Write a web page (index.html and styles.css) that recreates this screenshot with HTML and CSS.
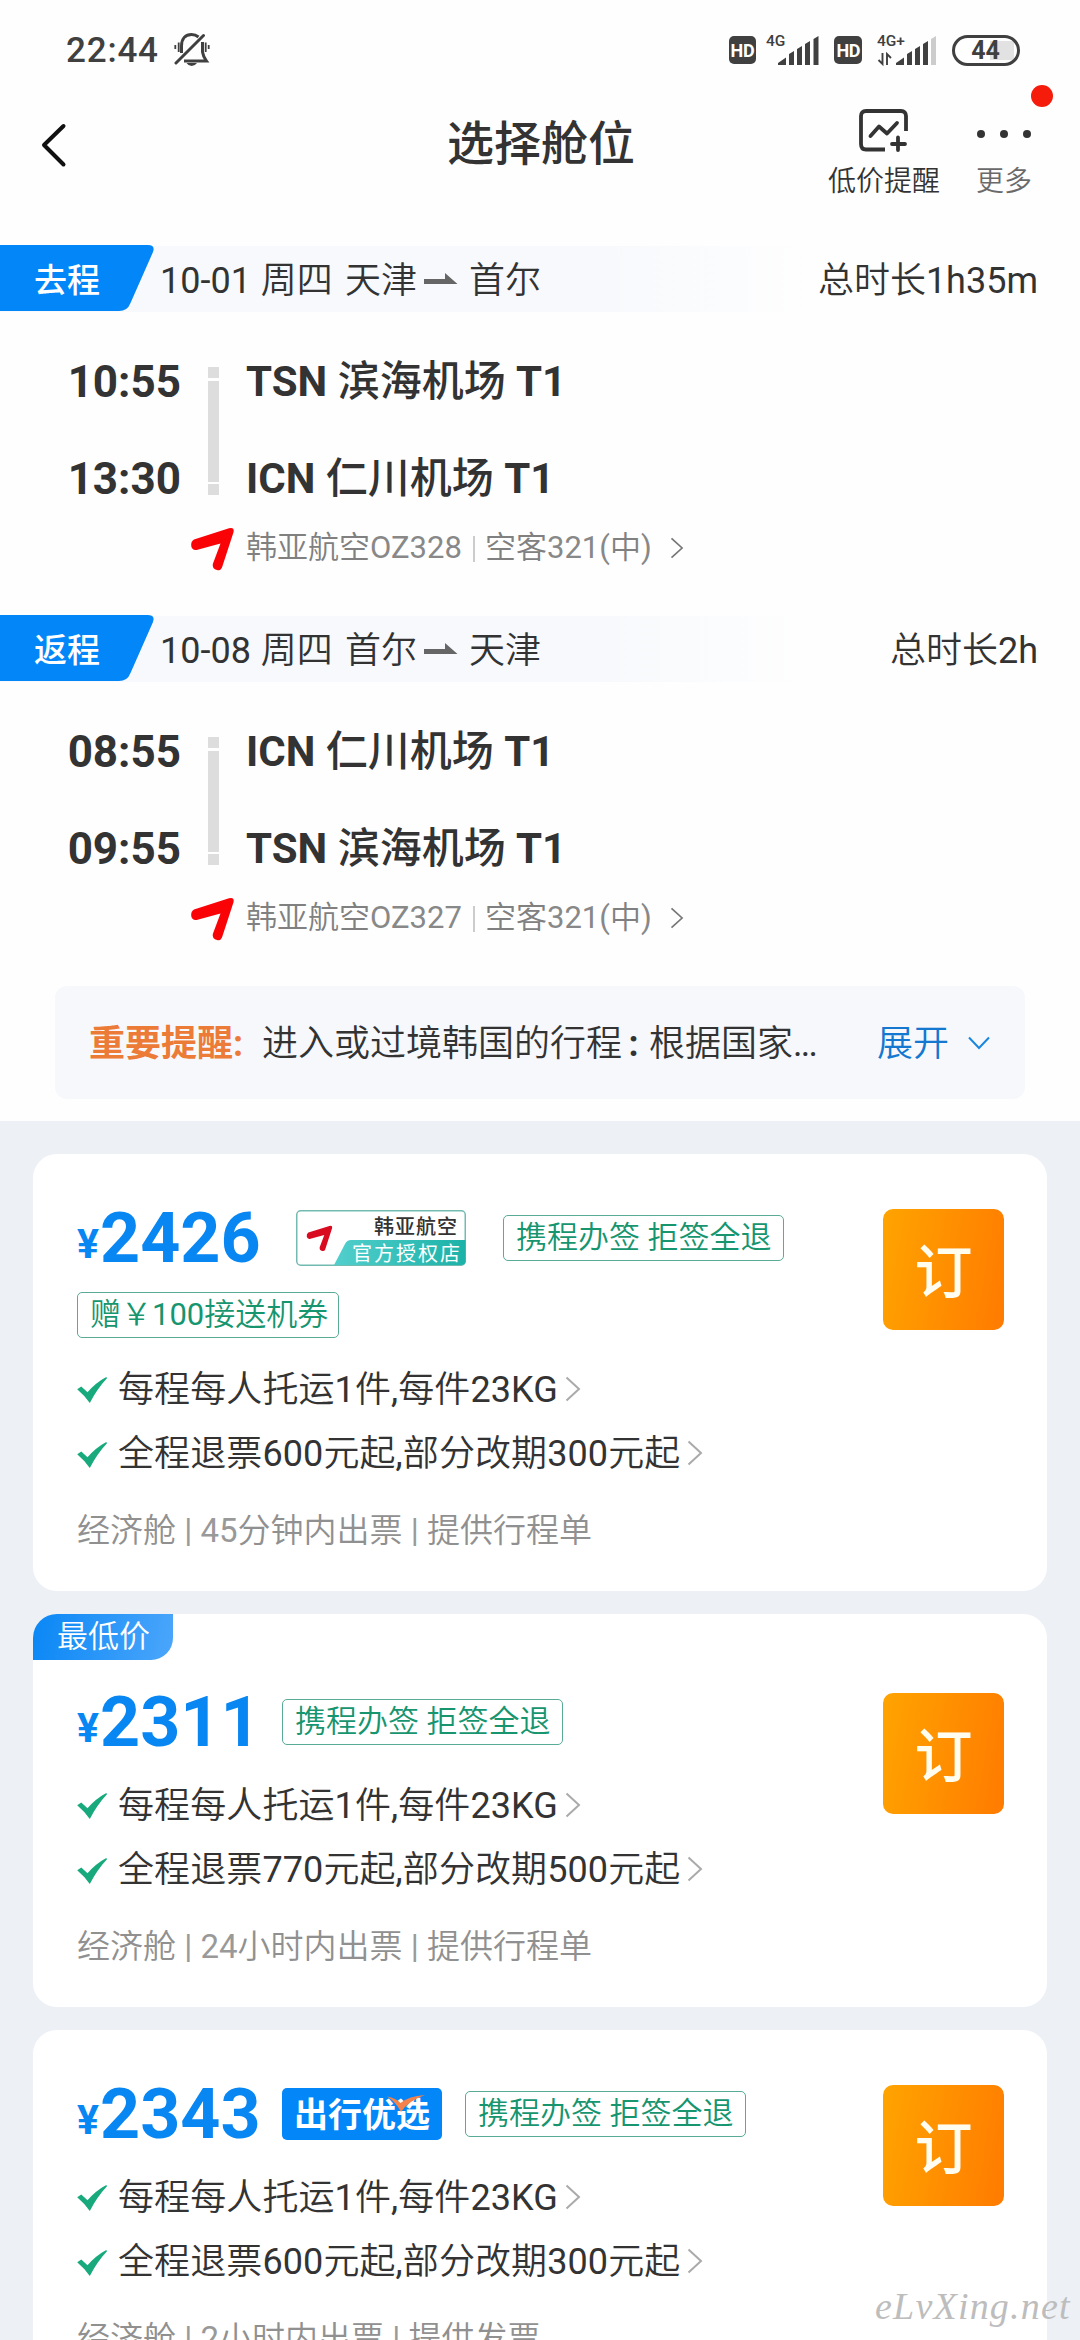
FILE: index.html
```html
<!DOCTYPE html>
<html lang="zh-CN">
<head>
<meta charset="utf-8">
<title>选择舱位</title>
<link rel="stylesheet" href="styles.css">
</head>
<body>
<svg class="defs" width="0" height="0" aria-hidden="true">
  <defs>
    <linearGradient id="teal" x1="0" x2="1"><stop offset="0" stop-color="#52cfcd"/><stop offset="1" stop-color="#1cb2a8"/></linearGradient>
    <symbol id="wing" viewBox="0 0 45 45"><path d="M4 13.5L39 2.3Q44.5 1 43.6 6L32 41.5Q30.500 45 27 44Q22 43 22.800 38L30.500 17.500L7.500 23.700Q2.500 25 1.300 20.500Q0.500 15.500 4 13.5Z"/></symbol>
    <symbol id="check" viewBox="0 0 30 26"><path d="M0.200 12.300L4.300 9.500L10.500 15.200Q19 5.500 29.300 0L30 1.300Q20 12 12.800 26Q7 18 0.200 12.300Z"/></symbol>
    <symbol id="more" viewBox="0 0 16 26"><path d="M1.500 1.500L14 13L1.500 24.500" fill="none" stroke="currentColor" stroke-width="2"/></symbol>
    <symbol id="to" viewBox="0 0 34 12"><path d="M0 6H21V0L33.500 11H0Z"/></symbol>
  </defs>
</svg>

<header class="top">
  <div class="status">
    <span class="clock">22:44</span>
    <svg class="bell" width="36" height="36" viewBox="0 0 36 36" fill="none" stroke="#404040" stroke-width="3">
      <path d="M7.500 21V14C7.500 6 12 2.500 17.500 2.500Q21.500 2.500 24.500 5M28.500 10V20Q29 24 32.500 29H10"/>
      <path d="M2 31L29.500 3.500" stroke-linecap="round"/>
      <path d="M1.300 13V17M4.700 10.500V20M34.700 13V17M31.700 10.500V20" stroke-width="1.800"/>
      <path d="M12.500 31H23Q21 34 17.700 34T12.500 31Z" fill="#404040" stroke="none"/>
    </svg>
    <span class="hd">HD</span>
    <svg class="sig1" width="54" height="34" viewBox="0 0 54 34" fill="#404040">
      <text class="net" x="0" y="13">4G</text>
      <path d="M12 32V30L20 24.500V32ZM23 32V21L28 18V32ZM31 32V16L36 13V32ZM39 32V11L44 8V32ZM47.500 32V6L52.500 3V32Z"/>
    </svg>
    <span class="hd hd2">HD</span>
    <svg class="sig2" width="62" height="34" viewBox="0 0 62 34" fill="#404040">
      <text class="net" x="0" y="13">4G+</text>
      <path d="M19 32V30L27 24.500V32ZM30 32V21L35 18V32ZM38 32V16L43 13V32ZM46 32V11L51 8V32Z"/>
      <path d="M54 32V6L59 3V32Z" fill="#ccc"/>
      <path d="M5.500 20V31L1.500 27M10 32V21L14 25" fill="none" stroke="#404040" stroke-width="1.900"/>
    </svg>
    <span class="battery"><b>44</b></span>
  </div>
  <nav class="nav">
    <svg class="back" width="27" height="46" viewBox="0 0 27 46" fill="none" stroke="#111" stroke-width="4" stroke-linecap="round" stroke-linejoin="round"><path d="M23.500 4L4 23L23.500 42.500"/></svg>
    <h1>选择舱位</h1>
    <div class="action alert">
      <svg width="50" height="44" viewBox="0 0 50 44" fill="none" stroke="#333" stroke-width="3.800">
        <path d="M47 22V7Q47 2 42 2H7Q2 2 2 7V35Q2 40.500 7 40.500H26"/>
        <path d="M11.500 27L20 17.500L28 24.500L38 14M39 28.500V41M33 35H46" stroke-linecap="round" stroke-linejoin="round"/>
      </svg>
      <span>低价提醒</span>
    </div>
    <div class="action extra">
      <svg width="56" height="44" viewBox="0 0 56 44" fill="#333"><circle cx="5" cy="25" r="4"/><circle cx="28" cy="25" r="4"/><circle cx="51" cy="25" r="4"/></svg>
      <span>更多</span>
      <i class="dot"></i>
    </div>
  </nav>
</header>

<main>
  <section class="leg">
    <div class="leg-head">
      <div class="leg-tag"><svg width="156" height="66" viewBox="0 0 156 66"><path d="M0 0H148Q155.500 0 153 7L130.500 58Q127.500 66 119 66H0Z" fill="#0386f8"/></svg><span>去程</span></div>
      <span class="date">10-01 <em>周四</em></span><span class="city">天津</span><svg class="to" width="34" height="12"><use href="#to"/></svg><span class="city">首尔</span>
      <span class="total"><em>总时长</em>1h35m</span>
    </div>
    <div class="leg-body">
      <div class="col times"><span>10:55</span><span>13:30</span></div>
      <div class="track"><i></i><i></i><i></i></div>
      <div class="col ports"><span><b>TSN</b> 滨海机场 <b>T1</b></span><span><b>ICN</b> 仁川机场 <b>T1</b></span></div>
    </div>
    <div class="flight"><svg width="45" height="45" fill="#fa0307"><use href="#wing"/></svg><span class="carrier"><em>韩亚航空</em>OZ328</span><i></i><span class="plane"><em>空客</em>321(<em>中</em>)</span><svg class="go" width="14" height="22" viewBox="0 0 16 26"><use href="#more"/></svg></div>
  </section>

  <section class="leg">
    <div class="leg-head">
      <div class="leg-tag"><svg width="156" height="66" viewBox="0 0 156 66"><path d="M0 0H148Q155.500 0 153 7L130.500 58Q127.500 66 119 66H0Z" fill="#0386f8"/></svg><span>返程</span></div>
      <span class="date">10-08 <em>周四</em></span><span class="city">首尔</span><svg class="to" width="34" height="12"><use href="#to"/></svg><span class="city">天津</span>
      <span class="total"><em>总时长</em>2h</span>
    </div>
    <div class="leg-body">
      <div class="col times"><span>08:55</span><span>09:55</span></div>
      <div class="track"><i></i><i></i><i></i></div>
      <div class="col ports"><span><b>ICN</b> 仁川机场 <b>T1</b></span><span><b>TSN</b> 滨海机场 <b>T1</b></span></div>
    </div>
    <div class="flight"><svg width="45" height="45" fill="#fa0307"><use href="#wing"/></svg><span class="carrier"><em>韩亚航空</em>OZ327</span><i></i><span class="plane"><em>空客</em>321(<em>中</em>)</span><svg class="go" width="14" height="22" viewBox="0 0 16 26"><use href="#more"/></svg></div>
  </section>

  <div class="notice">
    <strong>重要提醒:</strong><span class="notice-text">进入或过境韩国的行程<span class="colon">:</span>根据国家<span class="dots">...</span></span>
    <span class="expand">展开</span>
    <svg width="22" height="14" viewBox="0 0 22 14" fill="none" stroke="#1b86dd" stroke-width="2"><path d="M1 1.500L11 12L21 1.500"/></svg>
  </div>
</main>

<div class="offers">
  <article class="card">
    <div class="info">
      <div class="price-row">
        <div class="price"><small>¥</small>2426</div>
        <svg class="shop" width="170" height="56" viewBox="0 0 170 56">
          <rect x="0.750" y="0.750" width="168.500" height="54.500" rx="4" fill="#fff" stroke="#73bab1" stroke-width="1.500"/>
          <path d="M38 55L49 34Q51 30 55 30H169.500V51Q169.500 55 165 55Z" fill="url(#teal)"/>
          <svg x="10" y="14" width="27" height="28" fill="#d90b20"><use href="#wing"/></svg>
          <text class="shop-name" x="78" y="23.500">韩亚航空</text>
          <text class="shop-sub" x="56" y="51">官方授权店</text>
        </svg>
        <span class="tag after-shop">携程办签 拒签全退</span>
      </div>
      <div class="tag-row"><span class="tag gift"><em>赠￥</em>100<em>接送机券</em></span></div>
      <div class="perk"><svg width="30" height="26" fill="#18aa7c"><use href="#check"/></svg><span><em>每程每人托运</em>1<em>件</em>,<em>每件</em>23KG</span><svg class="chev" width="16" height="26"><use href="#more"/></svg></div>
      <div class="perk"><svg width="30" height="26" fill="#18aa7c"><use href="#check"/></svg><span><em>全程退票</em>600<em>元起</em>,<em>部分改期</em>300<em>元起</em></span><svg class="chev" width="16" height="26"><use href="#more"/></svg></div>
      <p class="meta"><em>经济舱</em> | 45<em>分钟内出票</em> | <em>提供行程单</em></p>
    </div>
    <button class="book">订</button>
  </article>

  <article class="card lowest">
    <span class="ribbon">最低价</span>
    <div class="info">
      <div class="price-row">
        <div class="price"><small>¥</small>2311</div>
        <span class="tag">携程办签 拒签全退</span>
      </div>
      <div class="perk"><svg width="30" height="26" fill="#18aa7c"><use href="#check"/></svg><span><em>每程每人托运</em>1<em>件</em>,<em>每件</em>23KG</span><svg class="chev" width="16" height="26"><use href="#more"/></svg></div>
      <div class="perk"><svg width="30" height="26" fill="#18aa7c"><use href="#check"/></svg><span><em>全程退票</em>770<em>元起</em>,<em>部分改期</em>500<em>元起</em></span><svg class="chev" width="16" height="26"><use href="#more"/></svg></div>
      <p class="meta"><em>经济舱</em> | 24<em>小时内出票</em> | <em>提供行程单</em></p>
    </div>
    <button class="book">订</button>
  </article>

  <article class="card">
    <div class="info">
      <div class="price-row">
        <div class="price"><small>¥</small>2343</div>
        <div class="pick">出行优选<svg width="38" height="17" viewBox="0 0 38 17"><path d="M0 1.500Q9 3 13.500 8Q22 1 38 0Q21 6 14 17Q9 7 0 1.500Z" fill="#f5824a"/></svg></div>
        <span class="tag after-pick">携程办签 拒签全退</span>
      </div>
      <div class="perk"><svg width="30" height="26" fill="#18aa7c"><use href="#check"/></svg><span><em>每程每人托运</em>1<em>件</em>,<em>每件</em>23KG</span><svg class="chev" width="16" height="26"><use href="#more"/></svg></div>
      <div class="perk"><svg width="30" height="26" fill="#18aa7c"><use href="#check"/></svg><span><em>全程退票</em>600<em>元起</em>,<em>部分改期</em>300<em>元起</em></span><svg class="chev" width="16" height="26"><use href="#more"/></svg></div>
      <p class="meta"><em>经济舱</em> | 2<em>小时内出票</em> | <em>提供发票</em></p>
    </div>
    <button class="book">订</button>
  </article>
</div>
<div class="watermark">eLvXing.net</div>
</body>
</html>
```
FILE: styles.css
```css
* { box-sizing: border-box; margin: 0; padding: 0; }
html { overflow: hidden; }
body {
  position: relative;
  width: 1080px;
  height: 2340px;
  overflow: hidden;
  background: #fefefe;
  color: #333;
  font-family: Roboto, "Noto Sans CJK SC", sans-serif;
  font-size: 36px;
  white-space: nowrap;
}
svg { display: block; flex: none; }
i { display: block; }
/* Chinese runs are set lighter than the digits beside them */
em { font-style: normal; font-weight: 350; }
.defs { position: absolute; }

/* status bar */
.status { display: flex; align-items: center; height: 100px; padding: 0 60px 0 66px; }
.clock { width: 107px; font-size: 35px; font-weight: 500; letter-spacing: 0.8px; line-height: 40px; padding-top: 1px; color: #404040; }
.bell { margin-left: 1px; }
.hd {
  width: 28px; height: 28px; margin-left: 519px;
  border-radius: 5px; background: #404040; color: #fff;
  font-size: 18px; font-weight: 700; line-height: 30px; text-align: center; letter-spacing: -0.3px;
}
.hd2 { margin-left: 14px; }
.net { font-size: 15.500px; font-weight: 500; }
.sig1 { margin-left: 10px; }
.sig2 { margin-left: 15px; }
.battery {
  width: 68px; height: 31px; margin-left: 13px; padding-right: 1px;
  border: 3px solid #404040; border-radius: 16px;
  background: linear-gradient(90deg, #fff 35px, #e2e2e2 35px) no-repeat left center / 59px 19px;
  font-size: 25px; line-height: 26px; text-align: center; color: #404040;
}
.battery b { font-weight: 700; }

/* title bar */
.nav { display: flex; height: 146px; padding-left: 40px; align-items: flex-start; }
.back { margin-top: 22px; }
h1 { margin: 17px 0 0 380px; width: 188px; font-size: 47px; font-weight: 500; line-height: 54px; }
.action { position: relative; display: flex; flex-direction: column; align-items: center; padding-top: 9px; font-size: 28px; font-weight: 350; line-height: 36px; }
.action span { margin-top: 11px; }
.alert { margin-left: 193px; }
.extra { margin-left: 36px; }
.extra span { color: #6a6a6a; }
.dot { position: absolute; left: 55px; top: -15px; width: 22px; height: 22px; border-radius: 50%; background: #f51c0c; }

/* flight legs */
.leg { height: 370px; }
.leg-head {
  display: flex; align-items: center; height: 66px; padding-right: 42px; line-height: 66px;
  background: linear-gradient(90deg, #f7f9fc 0, #f7f9fc 600px, #fefefe 810px);
}
.leg-head > span { padding-top: 3px; }
.leg-tag { display: grid; width: 160px; }
.leg-tag > * { grid-area: 1 / 1; }
.leg-tag span { padding: 3px 0 0 34px; color: #fff; font-size: 33px; font-weight: 500; }
.date { width: 185px; }
.date em { margin-left: 1px; }
.city { font-weight: 350; }
.to { margin: 0 11px 0 7px; fill: #666; }
.total { margin-left: auto; }
.leg-body { display: flex; height: 193px; padding: 45px 0 0 0; }
.col { display: flex; flex-direction: column; justify-content: space-between; height: 147px; line-height: 50px; }
.times { width: 181px; text-align: right; font-size: 44px; font-weight: 700; }
.ports { margin-left: 27px; font-size: 42px; font-weight: 500; }
.ports b { font-weight: 700; }
.track { display: flex; flex-direction: column; gap: 2.500px; width: 11px; height: 128px; margin: 10px 0 0 27px; }
.track i { background: #ddd; height: 11px; }
.track i:nth-child(2) { flex: 1; }
.flight { display: flex; align-items: center; height: 44px; margin-top: 21px; padding-left: 190px; font-size: 31px; line-height: 40px; color: #888; }
.flight em { color: #808080; }
.flight .carrier { margin-left: 11px; width: 227px; }
.flight i { width: 2px; height: 26px; background: #ccc; margin: 1px 10px 0 0; }
.go { margin-left: 18px; color: #777; }

.notice {
  display: flex; align-items: center; width: 970px; height: 113px; margin-left: 55px; padding-left: 34px;
  border-radius: 12px; background: #f6f8fc; line-height: 48px;
}
.notice > strong, .notice > span { margin-top: 3px; }
.notice strong { width: 173px; color: #ec7b38; font-weight: 700; }
.notice-text { width: 615px; font-weight: 350; }
.colon { display: inline-block; width: 27px; padding-right: 4px; text-align: center; font-weight: 700; }
.dots { letter-spacing: -1.800px; font-weight: 400; }
.expand { width: 91px; color: #1478d0; font-weight: 350; }

/* offers */
.offers { display: flex; flex-direction: column; gap: 23px; height: 1219px; margin-top: 22px; padding: 33px 33px 0; background: #edf0f5; overflow: hidden; }
.card { position: relative; flex: none; display: flex; width: 1014px; padding: 50px 43px 40.500px 44px; border-radius: 24px; background: #fff; overflow: hidden; }
.card.lowest { padding-top: 74px; }
.info { flex: 1; }
.price-row { display: flex; align-items: center; height: 68px; }
.price { width: 205px; padding-top: 9px; color: #0886f2; font-size: 70px; font-weight: 700; line-height: 68px; }
.price small { position: relative; top: -4px; font-size: 41px; margin-right: 1px; }
.shop { margin-left: 14px; }
.shop-name { font-size: 20px; font-weight: 500; letter-spacing: 1px; fill: #333; }
.shop-sub { font-size: 20px; letter-spacing: 2px; fill: #fff; }
.tag { height: 46px; padding: 0 11px 0 12px; border: 1.500px solid #59aa96; border-radius: 5px; color: #16956f; font-size: 31px; font-weight: 350; line-height: 43px; }
.gift { font-weight: 400; padding-right: 10px; }
.after-shop { margin-left: 37px; }
.after-pick { margin-left: 23px; }
.tag-row { display: flex; height: 68px; padding-top: 20px; }
.pick { position: relative; width: 160px; height: 52px; border-radius: 5px; background: #0386f8; color: #fff; font-size: 34px; font-weight: 700; line-height: 54px; text-align: center; }
.pick svg { position: absolute; left: 105px; top: 7px; }
.perk { display: flex; align-items: center; height: 64.500px; line-height: 48px; color: #333; }
.price-row + .perk, .tag-row + .perk { margin-top: 18px; }
.perk span { margin: -1px 0 0 11px; letter-spacing: 0.1px; }
.chev { margin: -3px 0 0 7px; color: #aaa; }
.meta { margin-top: 23.500px; color: #999; font-size: 33px; line-height: 40px; }
.meta em { color: #909090; }
.book {
  width: 121px; height: 121px; margin-top: 5px; padding-top: 7px; border: 0; border-radius: 10px;
  background: linear-gradient(100deg, #ffa400, #ff7b00);
  color: #fffdf0; font: 500 58px/114px Roboto, "Noto Sans CJK SC", sans-serif; text-align: center;
}
.ribbon {
  position: absolute; left: 0; top: 0; width: 140px; height: 46px; padding-left: 24px;
  border-radius: 0 0 22px 0; background: linear-gradient(100deg, #0a87f5, #4ba6fb);
  color: #fff; font-size: 31px; font-weight: 350; line-height: 45px;
}
.watermark {
  position: absolute; left: 875px; top: 2284px; color: #bdbdbd;
  font: italic 38px/44px "Liberation Serif", serif; letter-spacing: 1.200px;
}
```
